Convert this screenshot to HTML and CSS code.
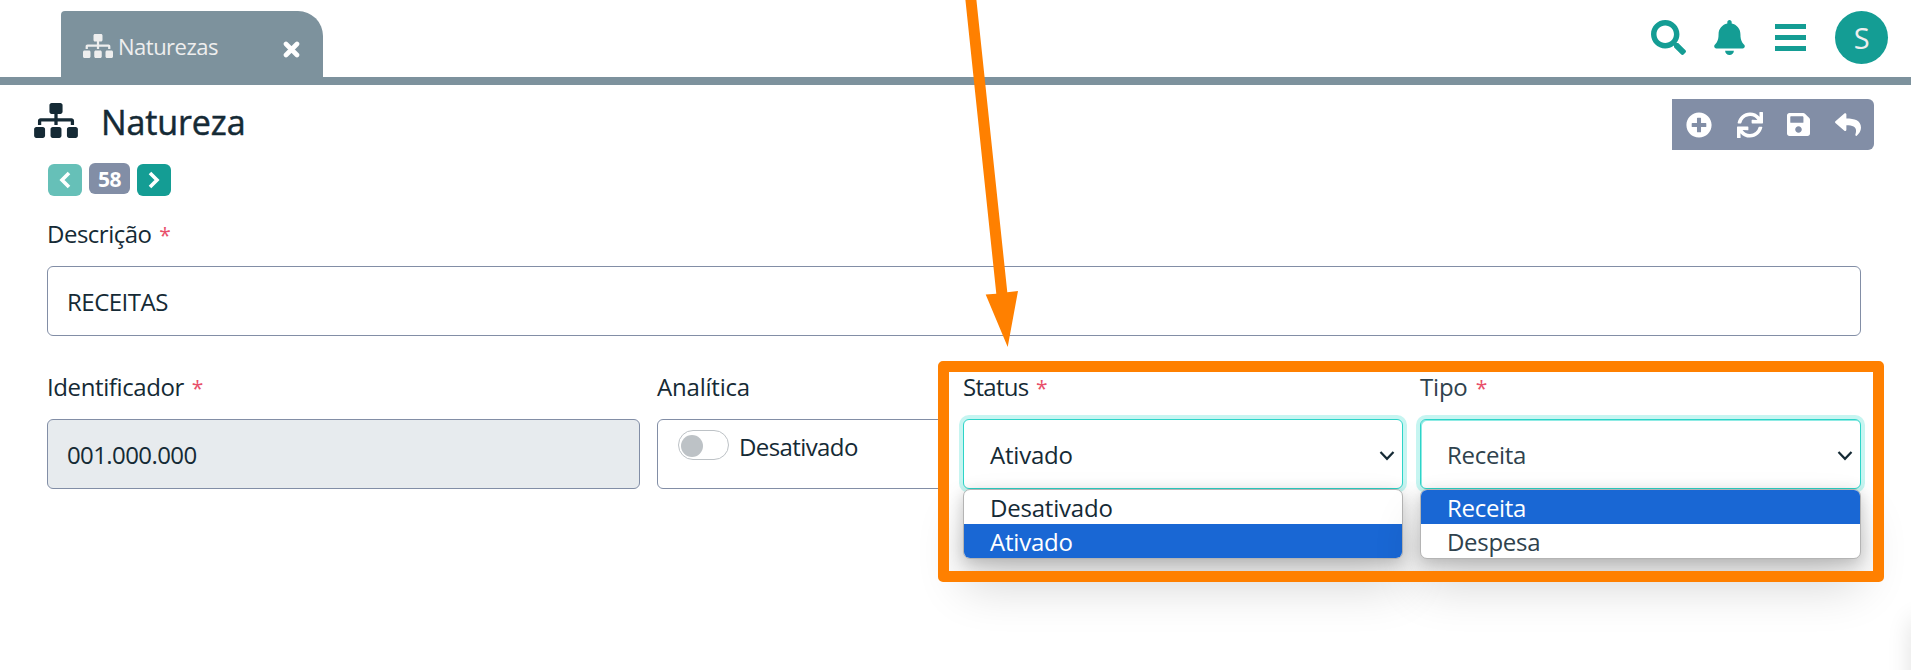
FILE: index.html
```html
<!DOCTYPE html>
<html lang="pt-BR">
<head>
<meta charset="utf-8">
<title>Natureza</title>
<link rel="stylesheet" href="styles.css">
</head>
<body>
<svg class="sprite" aria-hidden="true">
  <symbol id="sitemap" viewBox="0 0 640 512"><path d="M128 352H32c-17.67 0-32 14.33-32 32v96c0 17.67 14.33 32 32 32h96c17.67 0 32-14.33 32-32v-96c0-17.67-14.33-32-32-32zm-24-80h192v48h48v-48h192v48h48v-57.59c0-21.17-17.23-38.41-38.41-38.41H344v-64h40c17.67 0 32-14.33 32-32V32c0-17.67-14.33-32-32-32H256c-17.67 0-32 14.33-32 32v96c0 17.67 14.33 32 32 32h40v64H94.41C73.23 224 56 241.23 56 262.41V320h48v-48zm264 80h-96c-17.67 0-32 14.33-32 32v96c0 17.67 14.33 32 32 32h96c17.67 0 32-14.33 32-32v-96c0-17.67-14.33-32-32-32zm240 0h-96c-17.67 0-32 14.33-32 32v96c0 17.67 14.33 32 32 32h96c17.67 0 32-14.33 32-32v-96c0-17.67-14.33-32-32-32z"/></symbol>
  <symbol id="chev" viewBox="0 0 16 12"><path d="M1.500 2 8 8.800 14.500 2" fill="none" stroke="#152a35" stroke-width="2.2"/></symbol>
</svg>
<header class="topbar">
  <div class="tab">
    <svg class="tab-icon"><use href="#sitemap"/></svg>
    <span class="tab-name">Naturezas</span>
    <svg class="tab-close" viewBox="0 0 17 17"><path d="M3 3 14 14M14 3 3 14" stroke="#fff" stroke-width="4.6" stroke-linecap="round"/></svg>
  </div>
  <nav class="actions">
    <svg class="search" viewBox="0 0 512 512"><path d="M505 442.700L405.300 343c-4.500-4.500-10.600-7-17-7H372c27.600-35.300 44-79.700 44-128C416 93.100 322.900 0 208 0S0 93.100 0 208s93.100 208 208 208c48.300 0 92.700-16.400 128-44v16.300c0 6.400 2.500 12.500 7 17l99.700 99.700c9.400 9.400 24.600 9.400 33.900 0l28.300-28.300c9.400-9.400 9.400-24.600.1-34zM208 336c-70.700 0-128-57.200-128-128 0-70.700 57.200-128 128-128 70.700 0 128 57.200 128 128 0 70.700-57.200 128-128 128z"/></svg>
    <svg class="bell" viewBox="0 0 448 512"><path d="M224 512c35.320 0 63.970-28.650 63.970-64H160.030c0 35.350 28.650 64 63.970 64zm215.390-149.710c-19.320-20.760-55.470-51.990-55.470-154.290 0-77.700-54.480-139.900-127.940-155.160V32c0-17.670-14.320-32-31.980-32s-31.980 14.330-31.980 32v20.840C118.560 68.100 64.080 130.300 64.080 208c0 102.300-36.150 133.530-55.470 154.290-6 6.450-8.660 14.160-8.610 21.710.11 16.400 12.980 32 32.100 32h383.800c19.120 0 32-15.600 32.100-32 .05-7.550-2.610-15.270-8.610-21.710z"/></svg>
    <svg class="bars" viewBox="0 0 31 27"><path d="M0 0h31v5H0zM0 11h31v5H0zM0 22h31v5H0z"/></svg>
    <div class="avatar">S</div>
  </nav>
</header>
<main class="page">
  <div class="heading">
    <svg class="title-icon"><use href="#sitemap"/></svg>
    <h1>Natureza</h1>
    <div class="toolbar">
      <svg class="t-add" viewBox="0 0 512 512"><path d="M256 8C119 8 8 119 8 256s111 248 248 248 248-111 248-248S393 8 256 8zm144 276c0 6.600-5.400 12-12 12h-92v92c0 6.600-5.400 12-12 12h-56c-6.600 0-12-5.400-12-12v-92h-92c-6.600 0-12-5.400-12-12v-56c0-6.600 5.400-12 12-12h92v-92c0-6.600 5.400-12 12-12h56c6.600 0 12 5.400 12 12v92h92c6.600 0 12 5.400 12 12v56z"/></svg>
      <svg class="t-sync" viewBox="0 0 512 512"><path d="M440.650 12.570l4 82.770A247.160 247.160 0 0 0 255.830 8C134.730 8 33.910 94.920 12.290 209.820A12 12 0 0 0 24.090 224h49.050a12 12 0 0 0 11.670-9.260 175.910 175.910 0 0 1 317-56.940l-101.460-4.860a12 12 0 0 0-12.570 12v47.410a12 12 0 0 0 12 12H500a12 12 0 0 0 12-12V12a12 12 0 0 0-12-12h-47.370a12 12 0 0 0-11.980 12.570zM255.830 432a175.610 175.610 0 0 1-146-77.800l101.800 4.870a12 12 0 0 0 12.570-12v-47.400a12 12 0 0 0-12-12H12a12 12 0 0 0-12 12V500a12 12 0 0 0 12 12h47.350a12 12 0 0 0 12-12.600l-4.150-82.570A247.170 247.170 0 0 0 255.830 504c121.110 0 221.930-86.920 243.550-201.820a12 12 0 0 0-11.800-14.180h-49.050a12 12 0 0 0-11.670 9.260A175.860 175.860 0 0 1 255.830 432z"/></svg>
      <svg class="t-save" viewBox="0 32 448 448"><path d="M433.941 129.941l-83.882-83.882A48 48 0 0 0 316.118 32H48C21.490 32 0 53.490 0 80v352c0 26.510 21.490 48 48 48h352c26.510 0 48-21.490 48-48V163.882a48 48 0 0 0-14.059-33.941zM224 416c-35.346 0-64-28.654-64-64 0-35.346 28.654-64 64-64s64 28.654 64 64c0 35.346-28.654 64-64 64zm96-304.520V212c0 6.627-5.373 12-12 12H76c-6.627 0-12-5.373-12-12V108c0-6.627 5.373-12 12-12h228.520c3.183 0 6.235 1.264 8.485 3.515l3.480 3.480A11.996 11.996 0 0 1 320 111.480z"/></svg>
      <svg class="t-back" viewBox="0 32 512 448"><path d="M8.309 189.836L184.313 37.851C199.719 24.546 224 35.347 224 56.015v80.053c160.629 1.839 288 34.032 288 186.258 0 61.441-39.581 122.309-83.333 154.132-13.653 9.931-33.111-2.533-28.077-18.631 45.344-145.012-21.507-183.510-176.590-185.742V360c0 20.700-24.300 31.453-39.687 18.164l-176.004-152c-11.071-9.562-11.086-26.753 0-36.328z"/></svg>
    </div>
  </div>
  <div class="pager">
    <span class="pg prev"><svg viewBox="0 0 12 18"><path d="M10 2 3 9l7 7"/></svg></span>
    <span class="pg-num">58</span>
    <span class="pg next"><svg viewBox="0 0 12 18"><path d="M2 2l7 7-7 7"/></svg></span>
  </div>
  <form class="form">
    <div class="cell wide">
      <label>Descrição <b>*</b></label>
      <div class="field">RECEITAS</div>
    </div>
    <div class="cell">
      <label class="loose">Identificador <b>*</b></label>
      <div class="field readonly">001.000.000</div>
    </div>
    <div class="cell">
      <label class="looser">Analítica</label>
      <div class="field toggle"><i class="switch"></i><span>Desativado</span></div>
    </div>
    <div class="cell">
      <label class="tight">Status <b>*</b></label>
      <div class="field select"><span>Ativado</span><svg><use href="#chev"/></svg>
        <div class="menu"><div>Desativado</div><div class="on">Ativado</div></div>
      </div>
    </div>
    <div class="cell">
      <label class="looser soft">Tipo <b>*</b></label>
      <div class="field select second"><span class="soft">Receita</span><svg><use href="#chev"/></svg>
        <div class="menu"><div class="on">Receita</div><div class="soft">Despesa</div></div>
      </div>
    </div>
  </form>
</main>
<div class="highlight"></div>
<svg class="arrow" viewBox="0 0 60 350"><path d="M.200 -2 31.300 293.700 20.700 294.600 42.700 347 53 291 42.300 292.300 11.200 -2z"/></svg>
<div class="edge"></div>
</body>
</html>
```
FILE: styles.css
```css
* { box-sizing: border-box; }
body {
  margin: 0;
  width: 1911px;
  height: 670px;
  overflow: hidden;
  position: relative;
  background: #fff;
  color: #152a35;
  font: 24px/36px "Open Sans", "Noto Sans", sans-serif;
  letter-spacing: -0.5px;
}
svg { display: block; flex: none; fill: currentColor; }
.sprite { position: absolute; width: 0; height: 0; }

.topbar {
  height: 85px;
  padding: 11px 23px 0 61px;
  border-bottom: 8px solid #7d929d;
  display: flex;
  justify-content: space-between;
  align-items: flex-start;
}
.tab {
  width: 262px;
  height: 66px;
  padding: 0 23px 0 22px;
  display: flex;
  align-items: center;
  background: #7d929d;
  color: #eee;
  border-radius: 4px 25px 0 0;
}
.tab-icon { width: 30px; height: 24px; margin: 4px 5px 0 0; }
.tab-name { font-size: 22px; margin-top: 3px; letter-spacing: -0.5px; white-space: nowrap; }
.tab-close { width: 17px; height: 17px; margin: 10px 0 0 auto; }
.actions { display: flex; color: #149d94; }
.search { width: 35px; height: 35px; margin: 9px 28px 0 0; }
.bell { width: 31px; height: 35px; margin: 9px 30px 0 0; }
.bars { width: 31px; height: 27px; margin: 13px 29px 0 0; }
.avatar {
  width: 53px;
  height: 53px;
  border-radius: 50%;
  background: #149d94;
  color: #eee;
  font-size: 29px;
  line-height: 54px;
  text-align: center;
}

.heading { display: flex; height: 79px; padding: 14px 37px 0 34px; }
.title-icon { width: 44px; height: 35px; margin: 4px 23px 0 0; }
h1 {
  margin: -2px 0 0;
  font-size: 34px;
  font-weight: 500;
  line-height: 50px;
  letter-spacing: -0.1px;
  -webkit-text-stroke: 0.5px #152a35;
}
.toolbar {
  margin-left: auto;
  width: 202px;
  height: 51px;
  padding: 0 13px 0 14px;
  display: flex;
  align-items: center;
  justify-content: space-between;
  background: #828ea6;
  color: #fff;
  border-radius: 0 6px 6px 0;
}
.t-add, .t-sync { width: 26px; height: 26px; }
.t-save { width: 23px; height: 23px; }
.t-back { width: 26px; height: 23px; }

.pager { display: flex; gap: 7px; padding-left: 48px; height: 52px; }
.pg {
  width: 34px;
  height: 32px;
  border-radius: 6px;
  background: #149d94;
  display: flex;
  align-items: center;
  justify-content: center;
}
.prev { background: #66c0b8; }
.pg svg { width: 12px; height: 18px; fill: none; stroke: #fff; stroke-width: 3.6; }
.pg-num {
  width: 41px;
  height: 31px;
  margin-top: -1px;
  border-radius: 6px;
  background: #828ea6;
  color: #fff;
  font-size: 21px;
  font-weight: 700;
  line-height: 33px;
  text-align: center;
}

.form {
  padding: 0 50px 0 47px;
  display: grid;
  grid-template-columns: 593px 289px 440px 441px;
  column-gap: 17px;
  row-gap: 33px;
}
.wide { grid-column: 1 / -1; }
label { display: block; height: 36px; margin-bottom: 14px; }
label b { color: #e8506a; font-size: 21px; font-weight: 400; margin-left: 2px; line-height: 20px; }
.tight { letter-spacing: -0.7px; }
.loose { letter-spacing: -0.4px; }
.looser { letter-spacing: -0.2px; }
.field {
  height: 70px;
  padding: 0 19px;
  border: 1px solid #828ea6;
  border-radius: 6px;
  line-height: 69px;
  background: #fff;
}
.readonly { background: #e7ebee; letter-spacing: -0.6px; }
.toggle { display: flex; line-height: 36px; padding: 10px 20px 0; letter-spacing: -0.6px; }
.toggle span { margin-top: -1px; }
.switch {
  width: 51px;
  height: 30px;
  margin-right: 10px;
  padding: 4px 2px;
  border: 1px solid #bdc2c6;
  border-radius: 15px;
}
.switch::before {
  content: "";
  display: block;
  width: 22px;
  height: 22px;
  border-radius: 50%;
  background: #bdc2c6;
}
.select {
  position: relative;
  display: flex;
  justify-content: space-between;
  align-items: center;
  padding: 0 7px 0 26px;
  border-color: #2dd4c8;
  box-shadow: 0 0 0 4px #c6f5f1;
  letter-spacing: -0.2px;
}
.second { box-shadow: 0 0 0 4px #c6f5f1, inset 1px 1px 0 #8eebe4; letter-spacing: -0.3px; }
.select > svg { width: 16px; height: 12px; margin-top: 3px; }
.soft { color: #2f424d; }
.menu {
  position: absolute;
  left: -1px;
  right: -1px;
  top: 69px;
  height: 70px;
  border: 1px solid #b4b4b4;
  border-radius: 7px;
  overflow: hidden;
  background: #fff;
  line-height: 35px;
  box-shadow: 0 4px 16px rgba(0, 0, 0, .2), 0 28px 48px rgba(0, 0, 0, .16);
}
.menu div { height: 34px; padding-left: 26px; }
.menu .on { background: #1967d4; color: #fff; }

.highlight {
  position: absolute;
  left: 938px;
  top: 361px;
  width: 946px;
  height: 221px;
  border: 11px solid #ff8000;
  border-radius: 5px;
}
.arrow { position: absolute; left: 965px; top: 0; width: 60px; height: 350px; fill: #ff8000; }
.edge {
  position: absolute;
  right: -40px;
  top: 620px;
  width: 40px;
  height: 80px;
  box-shadow: 0 0 24px rgba(0, 0, 0, .12);
}
```
